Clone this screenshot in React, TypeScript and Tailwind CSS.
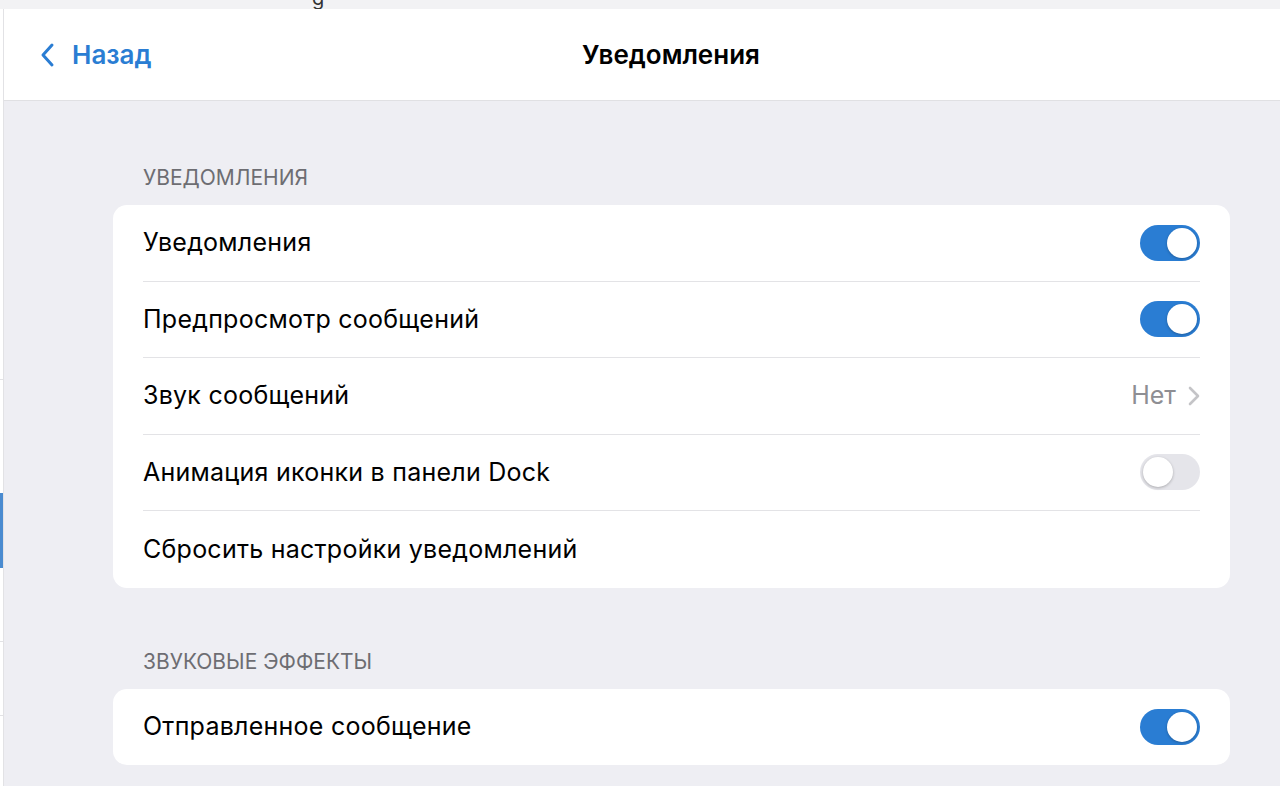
import React from 'react';

const font = { fontFamily: 'Inter, "Noto Sans", sans-serif' };

const Toggle = ({ on }: { on: boolean }) => (
  <div
    className={`relative w-[60px] h-[36px] rounded-full ${on ? 'bg-[#2a7dd3]' : 'bg-[#e5e5ea]'}`}
  >
    <div
      className={`absolute top-[3px] w-[30px] h-[30px] rounded-full bg-white shadow-[0_1px_3px_rgba(0,0,0,0.25)] ${on ? 'left-[27px]' : 'left-[3px]'}`}
    />
  </div>
);

type Row = {
  label: string;
  toggle?: boolean;
  value?: string;
};

const Section = ({ title, rows }: { title: string; rows: Row[] }) => (
  <div>
    <div className="pl-[30px] text-[21px] text-[#6d6d72] h-[26px] leading-[26px]">
      {title}
    </div>
    <div className="mt-[14px] bg-white rounded-[14px] pl-[30px] pr-[30px]">
      {rows.map((row, i) => (
        <div
          key={row.label}
          className={`h-[76.5px] flex items-center justify-between ${i < rows.length - 1 ? 'border-b border-[#e3e3e6]' : ''}`}
        >
          <span className="text-[25px] tracking-[0.25px] text-black">{row.label}</span>
          {row.toggle !== undefined && <Toggle on={row.toggle} />}
          {row.value && (
            <div className="flex items-center gap-[12px]">
              <span className="text-[25px] text-[#8e8e93]">{row.value}</span>
              <svg width="12" height="20" viewBox="0 0 12 20" fill="none">
                <path d="M2 2l8 8-8 8" stroke="#c4c4c7" strokeWidth="2.6" strokeLinecap="round" strokeLinejoin="round" />
              </svg>
            </div>
          )}
        </div>
      ))}
    </div>
  </div>
);

export default function App() {
  return (
    <div className="w-[1280px] h-[786px] overflow-hidden bg-[#f2f2f4] flex flex-col" style={font}>
      {/* strip of the window above */}
      <div className="h-[9px] relative shrink-0 overflow-hidden">
        <span className="absolute left-[312px] -top-[17px] text-[20px] text-[#333]">g</span>
      </div>
      <div className="flex flex-1 min-h-0">
        {/* edge of sidebar */}
        <div className="w-[4px] bg-white border-r border-[#e2e2e5] flex flex-col shrink-0">
          <div className="h-[371px] border-b border-[#e2e2e5]" />
          <div className="h-[113px]" />
          <div className="h-[75px] bg-[#4a8bd0]" />
          <div className="h-[74px] border-b border-[#e2e2e5]" />
          <div className="h-[74px] border-b border-[#e2e2e5]" />
        </div>
        <div className="flex-1 flex flex-col bg-[#eeeef3]">
          <div className="h-[92px] bg-white border-b border-[#e0e0e3] flex items-center relative shrink-0">
            <div className="flex items-center pl-[35px] gap-[16px] text-[#2a7dd3]">
              <svg width="17" height="26" viewBox="0 0 17 26" fill="none">
                <path d="M13 3L4 13l9 10" stroke="#2a7dd3" strokeWidth="3" strokeLinecap="round" strokeLinejoin="round" />
              </svg>
              <span className="text-[26px] font-semibold">Назад</span>
            </div>
            <div className="absolute left-0 right-0 text-center text-[26px] font-semibold text-black pointer-events-none pl-[58px]">
              Уведомления
            </div>
          </div>
          <div className="pl-[109px] pr-[50px] pt-[64px] flex flex-col gap-[61px]">
            <Section
              title="УВЕДОМЛЕНИЯ"
              rows={[
                { label: 'Уведомления', toggle: true },
                { label: 'Предпросмотр сообщений', toggle: true },
                { label: 'Звук сообщений', value: 'Нет' },
                { label: 'Анимация иконки в панели Dock', toggle: false },
                { label: 'Сбросить настройки уведомлений' },
              ]}
            />
            <Section
              title="ЗВУКОВЫЕ ЭФФЕКТЫ"
              rows={[{ label: 'Отправленное сообщение', toggle: true }]}
            />
          </div>
        </div>
      </div>
    </div>
  );
}
